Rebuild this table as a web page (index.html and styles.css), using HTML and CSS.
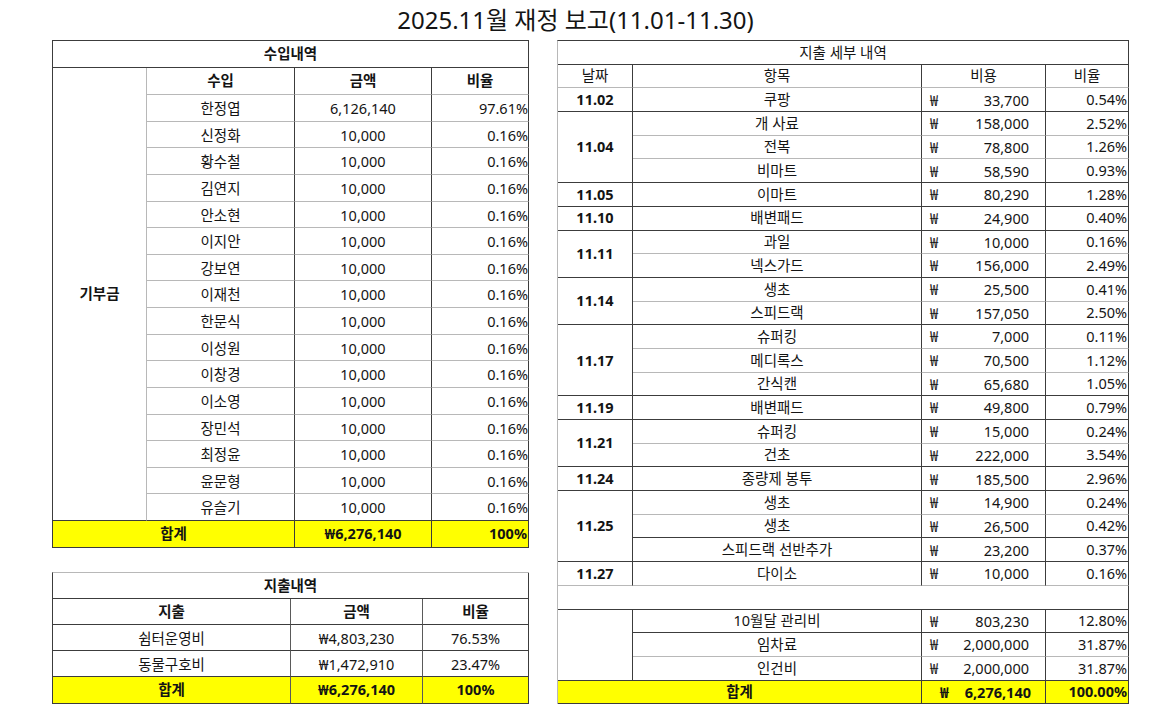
FILE: index.html
```html
<!DOCTYPE html>
<html lang="ko">
<head>
<meta charset="utf-8">
<title>2025.11월 재정 보고</title>
<link rel="stylesheet" href="styles.css">
</head>
<body>
<div class="page">
  <h1 class="title">2025.11월 재정 보고(11.01-11.30)</h1>
  <div class="main">
    <div class="left">
      <table class="inc">
        <colgroup><col class="c1"><col class="c2"><col class="c3"><col class="c4"></colgroup>
        <tr class="cap"><td colspan="4">수입내역</td></tr>
        <tr class="hd"><td rowspan="17" class="cat">기부금</td><td>수입</td><td>금액</td><td>비율</td></tr>
        <tr class="row"><td>한정엽</td><td>6,126,140</td><td class="r">97.61%</td></tr>
        <tr class="row"><td>신정화</td><td>10,000</td><td class="r">0.16%</td></tr>
        <tr class="row"><td>황수철</td><td>10,000</td><td class="r">0.16%</td></tr>
        <tr class="row"><td>김연지</td><td>10,000</td><td class="r">0.16%</td></tr>
        <tr class="row"><td>안소현</td><td>10,000</td><td class="r">0.16%</td></tr>
        <tr class="row"><td>이지안</td><td>10,000</td><td class="r">0.16%</td></tr>
        <tr class="row"><td>강보연</td><td>10,000</td><td class="r">0.16%</td></tr>
        <tr class="row"><td>이재천</td><td>10,000</td><td class="r">0.16%</td></tr>
        <tr class="row"><td>한문식</td><td>10,000</td><td class="r">0.16%</td></tr>
        <tr class="row"><td>이성원</td><td>10,000</td><td class="r">0.16%</td></tr>
        <tr class="row"><td>이창경</td><td>10,000</td><td class="r">0.16%</td></tr>
        <tr class="row"><td>이소영</td><td>10,000</td><td class="r">0.16%</td></tr>
        <tr class="row"><td>장민석</td><td>10,000</td><td class="r">0.16%</td></tr>
        <tr class="row"><td>최정윤</td><td>10,000</td><td class="r">0.16%</td></tr>
        <tr class="row"><td>윤문형</td><td>10,000</td><td class="r">0.16%</td></tr>
        <tr class="row last"><td>유슬기</td><td>10,000</td><td class="r">0.16%</td></tr>
        <tr class="tot"><td colspan="2">합계</td><td>₩6,276,140</td><td class="r">100%</td></tr>
      </table>

      <table class="exp">
        <colgroup><col class="e1"><col class="e2"><col class="e3"></colgroup>
        <tr class="cap"><td colspan="3">지출내역</td></tr>
        <tr class="hd"><td>지출</td><td>금액</td><td>비율</td></tr>
        <tr class="row"><td>쉼터운영비</td><td>₩4,803,230</td><td>76.53%</td></tr>
        <tr class="row"><td>동물구호비</td><td>₩1,472,910</td><td>23.47%</td></tr>
        <tr class="tot"><td>합계</td><td>₩6,276,140</td><td>100%</td></tr>
      </table>
    </div>

    <div class="right">
      <table class="det">
        <colgroup><col class="d1"><col class="d2"><col class="d3"><col class="d4"></colgroup>
        <tr class="cap"><td colspan="4">지출 세부 내역</td></tr>
        <tr class="hd"><td>날짜</td><td>항목</td><td>비용</td><td>비율</td></tr>

        <tr><td class="d">11.02</td><td>쿠팡</td><td class="acct"><div class="ac"><span class="won">₩</span><span>33,700</span></div></td><td class="r">0.54%</td></tr>

        <tr class="l"><td class="d" rowspan="3">11.04</td><td>개 사료</td><td class="acct"><div class="ac"><span class="won">₩</span><span>158,000</span></div></td><td class="r">2.52%</td></tr>
        <tr class="l"><td>전복</td><td class="acct"><div class="ac"><span class="won">₩</span><span>78,800</span></div></td><td class="r">1.26%</td></tr>
        <tr><td>비마트</td><td class="acct"><div class="ac"><span class="won">₩</span><span>58,590</span></div></td><td class="r">0.93%</td></tr>

        <tr><td class="d">11.05</td><td>이마트</td><td class="acct"><div class="ac"><span class="won">₩</span><span>80,290</span></div></td><td class="r">1.28%</td></tr>

        <tr><td class="d">11.10</td><td>배변패드</td><td class="acct"><div class="ac"><span class="won">₩</span><span>24,900</span></div></td><td class="r">0.40%</td></tr>

        <tr class="l"><td class="d" rowspan="2">11.11</td><td>과일</td><td class="acct"><div class="ac"><span class="won">₩</span><span>10,000</span></div></td><td class="r">0.16%</td></tr>
        <tr><td>넥스가드</td><td class="acct"><div class="ac"><span class="won">₩</span><span>156,000</span></div></td><td class="r">2.49%</td></tr>

        <tr class="l"><td class="d" rowspan="2">11.14</td><td>생초</td><td class="acct"><div class="ac"><span class="won">₩</span><span>25,500</span></div></td><td class="r">0.41%</td></tr>
        <tr><td>스피드랙</td><td class="acct"><div class="ac"><span class="won">₩</span><span>157,050</span></div></td><td class="r">2.50%</td></tr>

        <tr class="l"><td class="d" rowspan="3">11.17</td><td>슈퍼킹</td><td class="acct"><div class="ac"><span class="won">₩</span><span>7,000</span></div></td><td class="r">0.11%</td></tr>
        <tr class="l"><td>메디록스</td><td class="acct"><div class="ac"><span class="won">₩</span><span>70,500</span></div></td><td class="r">1.12%</td></tr>
        <tr><td>간식캔</td><td class="acct"><div class="ac"><span class="won">₩</span><span>65,680</span></div></td><td class="r">1.05%</td></tr>

        <tr><td class="d">11.19</td><td>배변패드</td><td class="acct"><div class="ac"><span class="won">₩</span><span>49,800</span></div></td><td class="r">0.79%</td></tr>

        <tr class="l"><td class="d" rowspan="2">11.21</td><td>슈퍼킹</td><td class="acct"><div class="ac"><span class="won">₩</span><span>15,000</span></div></td><td class="r">0.24%</td></tr>
        <tr><td>건초</td><td class="acct"><div class="ac"><span class="won">₩</span><span>222,000</span></div></td><td class="r">3.54%</td></tr>

        <tr><td class="d">11.24</td><td>종량제 봉투</td><td class="acct"><div class="ac"><span class="won">₩</span><span>185,500</span></div></td><td class="r">2.96%</td></tr>

        <tr class="l"><td class="d" rowspan="3">11.25</td><td>생초</td><td class="acct"><div class="ac"><span class="won">₩</span><span>14,900</span></div></td><td class="r">0.24%</td></tr>
        <tr><td>생초</td><td class="acct"><div class="ac"><span class="won">₩</span><span>26,500</span></div></td><td class="r">0.42%</td></tr>
        <tr><td>스피드랙 선반추가</td><td class="acct"><div class="ac"><span class="won">₩</span><span>23,200</span></div></td><td class="r">0.37%</td></tr>

        <tr class="l all"><td class="d">11.27</td><td>다이소</td><td class="acct"><div class="ac"><span class="won">₩</span><span>10,000</span></div></td><td class="r">0.16%</td></tr>

        <tr class="empty"><td colspan="4"></td></tr>

        <tr><td class="d" rowspan="3"></td><td>10월달 관리비</td><td class="acct"><div class="ac"><span class="won">₩</span><span>803,230</span></div></td><td class="r">12.80%</td></tr>
        <tr class="l"><td>임차료</td><td class="acct"><div class="ac"><span class="won">₩</span><span>2,000,000</span></div></td><td class="r">31.87%</td></tr>
        <tr><td>인건비</td><td class="acct"><div class="ac"><span class="won">₩</span><span>2,000,000</span></div></td><td class="r">31.87%</td></tr>

        <tr class="tot"><td colspan="2">합계</td><td class="acct"><div class="ac ac-tot"><span class="won">₩</span><span>6,276,140</span></div></td><td class="r">100.00%</td></tr>
      </table>
    </div>
  </div>
</div>
</body>
</html>
```

FILE: styles.css
```css
:root {
  --dk: #3c3c3c;
  --md: #5a5a5a;
  --lt: #b8b8b8;
  --yl: #ffff00;
}

* { box-sizing: border-box; }

html, body {
  margin: 0;
  padding: 0;
  background: #ffffff;
}

body {
  font-family: "Noto Sans", "Noto Sans CJK KR", sans-serif;
  color: #141414;
  font-size: 14.5px;
}

.page {
  width: 1175px;
  height: 716px;
}

.title {
  margin: 0;
  height: 40px;
  line-height: 40px;
  font-size: 24px;
  font-weight: 400;
  text-align: center;
  padding-right: 24px;
}

.main {
  display: flex;
  align-items: flex-start;
  gap: 28px;
  padding-left: 52px;
}

.left {
  display: flex;
  flex-direction: column;
  gap: 24px;
  width: 477px;
}

.right {
  width: 572px;
}

table {
  border-collapse: separate;
  border-spacing: 0;
  table-layout: fixed;
  line-height: 1.2;
}

td {
  padding: 0;
  text-align: center;
  vertical-align: middle;
  white-space: nowrap;
  overflow: hidden;
}

td.r { text-align: right; padding-right: 1px; }

/* ---------- income table ---------- */
.inc {
  width: 477px;
  border-top: 1px solid var(--dk);
  border-left: 1px solid var(--dk);
}
.inc .c1 { width: 94px; }
.inc .c2 { width: 148px; }
.inc .c3 { width: 137px; }
.inc .c4 { width: 97px; }

.inc td {
  border-right: 1px solid var(--dk);
  border-bottom: 1px solid var(--lt);
}
.inc .cap td {
  height: 27px;
  font-weight: 700;
  border-bottom-color: var(--dk);
}
.inc .hd td {
  height: 27px;
  font-weight: 700;
}
.inc td.cat {
  border-right-color: var(--lt);
  border-bottom-color: var(--dk);
}
.inc .row td {
  height: 26.625px;
  padding-top: 2px;
}
.inc .row td.r { padding-right: 0; }
.inc .row.last td { border-bottom-color: var(--dk); }
.inc .tot td {
  height: 27px;
  background: var(--yl);
  font-weight: 700;
  border-bottom-color: var(--dk);
}

/* ---------- expense summary ---------- */
.exp {
  width: 477px;
  border-top: 1px solid var(--lt);
  border-left: 1px solid var(--dk);
}
.exp .e1 { width: 238px; }
.exp .e2 { width: 132px; }
.exp .e3 { width: 106px; }

.exp td {
  height: 26px;
  border-right: 1px solid var(--md);
  border-bottom: 1px solid var(--dk);
}
.exp td:last-child { border-right-color: var(--dk); }
.exp .cap td,
.exp .hd td { font-weight: 700; }
.exp .row td { padding-top: 2px; }
.exp .tot td {
  height: 27px;
  background: var(--yl);
  font-weight: 700;
}

/* ---------- detail table ---------- */
.det {
  width: 572px;
  border-top: 1px solid var(--dk);
  border-left: 1px solid var(--lt);
}
.det .d1 { width: 75px; }
.det .d2 { width: 289px; }
.det .d3 { width: 124px; }
.det .d4 { width: 83px; }

.det td {
  height: 23.7px;
  border-right: 1px solid var(--dk);
  border-bottom: 1px solid var(--dk);
}
.det .cap td { font-weight: 400; }
.det .hd td { border-bottom-color: var(--lt); }
.det td.d { font-weight: 700; }
.det tr.l td:not(.d) { border-bottom-color: var(--lt); }
.det tr.all td { border-bottom-color: var(--lt); }

.det .empty td {
  border-bottom-color: var(--dk);
}

.det td.acct { padding: 0; }
.ac {
  display: flex;
  justify-content: space-between;
  align-items: baseline;
  padding: 0 16px 0 8px;
}
.ac-tot {
  padding: 0 14px 0 18px;
}
.won {
  font-family: "Noto Sans CJK KR", "Noto Sans", sans-serif;
}

.det .tot td {
  background: var(--yl);
  font-weight: 700;
}
```
